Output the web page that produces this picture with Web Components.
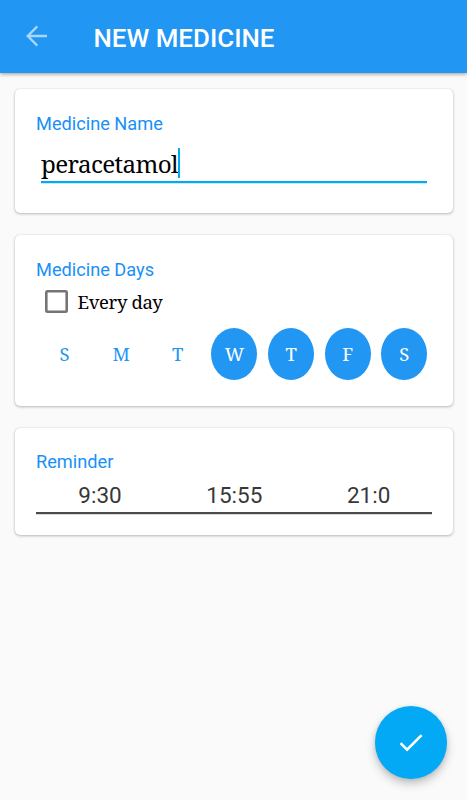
<!DOCTYPE html>
<html lang="en">
<head>
<meta charset="utf-8">
<title>New medicine</title>
<style>
html, body { margin: 0; height: 100%; background: #fafafa; }
body { overflow: hidden; font-family: Roboto, sans-serif; --primary: #2196f3; --accent: #03a9f4; --serif: "Noto Serif", "DejaVu Serif Condensed", "DejaVu Serif", serif; }
</style>
</head>
<body>
<medicine-screen></medicine-screen>
<script>
const define = (name, html, setup) => {
  customElements.define(name, class extends HTMLElement {
    constructor() {
      super();
      const template = document.createElement('template');
      template.innerHTML = html;
      this.attachShadow({ mode: 'open' }).append(template.content.cloneNode(true));
    }
    connectedCallback() { if (setup) setup(this); }
  });
};

define('app-bar', `
<style>
:host { display: flex; align-items: center; box-sizing: border-box; height: 72.5px; padding: 0 26px; background: var(--primary); color: #fff; box-shadow: 0 1px 4px rgba(0,0,0,.4); }
svg { display: block; width: 22px; height: 22px; flex: none; }
h1 { margin: 3px 0 0 45.5px; font-size: 25.9px; line-height: 30px; font-weight: 500; white-space: nowrap; }
</style>
<svg viewBox="0 0 22 22" fill="none" stroke="#a9d6fa" stroke-width="2.3"><path d="M21 11H2M11.3 1.4 1.7 11l9.6 9.6"/></svg>
<h1><slot></slot></h1>`);

define('form-card', `
<style>
:host { display: block; box-sizing: border-box; padding: 23.5px 21px 0; background: #fff; border-radius: 5px; box-shadow: 0 1px 3px rgba(0,0,0,.26), 0 0 1px rgba(0,0,0,.18); }
h2 { margin: 0; font-size: 18.2px; line-height: 22px; font-weight: 400; color: #1890f8; white-space: nowrap; }
</style>
<h2></h2><slot></slot>`, el => { el.shadowRoot.querySelector('h2').textContent = el.getAttribute('label'); });

define('name-field', `
<style>
:host { display: flex; align-items: center; box-sizing: border-box; height: 35px; margin: 13.5px 5.5px 0 5px; padding-bottom: 3px; border-bottom: 2px solid var(--accent); box-shadow: 0 1px 0 #c4eafc; font: 24.2px/30px var(--serif); letter-spacing: -.6px; color: #000; }
span { padding-top: 1px; }
i { width: 2px; height: 30px; margin-left: .3px; background: var(--accent); }
</style>
<span><slot></slot></span><i></i>`);

define('check-option', `
<style>
:host { display: flex; align-items: center; gap: 9.5px; margin: 9px 0 0 9px; height: 24px; font: 18.5px/24px var(--serif); letter-spacing: -.35px; color: #000; }
i { width: 23px; height: 23px; box-shadow: inset 0 0 0 2.6px #757575; border-radius: 2.5px; }
</style>
<i></i><span><slot></slot></span>`);

define('day-row', `
<style>
:host { display: grid; grid-template-columns: repeat(7, 46px); column-gap: 10.65px; margin: 14px 0 0 5.5px; }
</style>
<slot></slot>`);

define('day-toggle', `
<style>
:host { display: flex; align-items: center; justify-content: center; height: 52px; border-radius: 50%; font: 18.5px/24px var(--serif); color: var(--primary); }
:host([selected]) { background: var(--primary); color: #fff; }
</style>
<span><slot></slot></span>`);

define('time-row', `
<style>
:host { display: grid; grid-template-columns: repeat(3, 134.3px); box-sizing: border-box; margin-top: 7px; width: 396.4px; height: 33.5px; border-bottom: 2px solid #4a4a4a; box-shadow: 0 1px 0 #d8d8d8; }
</style>
<slot></slot>`);

define('time-value', `
<style>
:host { display: block; width: 128px; padding-top: 1px; text-align: center; font-size: 22.5px; line-height: 28px; color: #383838; }
</style>
<slot></slot>`);

define('confirm-button', `
<style>
:host { display: grid; place-items: center; width: 72.6px; height: 72.6px; border-radius: 50%; background: var(--accent); box-shadow: 0 5px 10px rgba(0,0,0,.22), 0 1px 4px rgba(0,0,0,.1); }
svg { width: 24px; height: 20px; }
</style>
<svg viewBox="0 0 24 20" fill="none" stroke="#fff" stroke-width="2.6"><path d="m1.6 10.2 6.5 6.5L22.6 2.2"/></svg>`);

define('medicine-screen', `
<style>
:host { display: flex; flex-direction: column; height: 100vh; }
main { display: flex; flex-direction: column; gap: 22px; padding: 16.5px 13.6px 0 15px; }
.name { height: 124px; }
.days { height: 170.5px; }
.times { height: 107px; }
confirm-button { margin: auto 19.8px 21px auto; }
</style>
<app-bar>NEW MEDICINE</app-bar>
<main>
<form-card class="name" label="Medicine Name"><name-field>peracetamol</name-field></form-card>
<form-card class="days" label="Medicine Days">
<check-option>Every day</check-option>
<day-row><day-toggle>S</day-toggle><day-toggle>M</day-toggle><day-toggle>T</day-toggle><day-toggle selected>W</day-toggle><day-toggle selected>T</day-toggle><day-toggle selected>F</day-toggle><day-toggle selected>S</day-toggle></day-row>
</form-card>
<form-card class="times" label="Reminder">
<time-row><time-value>9:30</time-value><time-value>15:55</time-value><time-value>21:0</time-value></time-row>
</form-card>
</main>
<confirm-button></confirm-button>`);
</script>
</body>
</html>
